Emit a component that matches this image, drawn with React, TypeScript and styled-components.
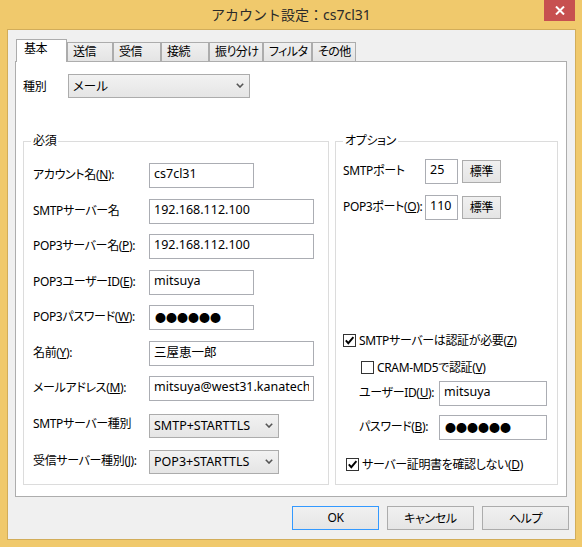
import React from "react";
import styled, { createGlobalStyle } from "styled-components";

const FONT = `"Noto Sans", "Noto Sans CJK JP", sans-serif`;

const GlobalStyle = createGlobalStyle`
  html, body { margin: 0; padding: 0; background: #ffffff; }
  body { font-family: ${FONT}; }
  * { box-sizing: border-box; }
`;

const Window = styled.div`
  width: 582px;
  height: 547px;
  background: #f0c96c;
  display: flex;
  flex-direction: column;
  font-family: ${FONT};
  font-size: 12px;
  letter-spacing: -0.35px;
  color: #000;
  font-feature-settings: "palt";
`;

const TitleBar = styled.div`
  height: 29px;
  flex: none;
  display: grid;
  grid-template-columns: 1fr auto 1fr;
  align-items: start;
`;

const Title = styled.div`
  grid-column: 2;
  font-size: 14px;
  letter-spacing: normal;
  line-height: 29px;
  color: #2a2a2a;
  font-feature-settings: normal;
  white-space: nowrap;
`;

const CloseButton = styled.div`
  grid-column: 3;
  justify-self: end;
  width: 31px;
  height: 21px;
  margin-right: 7px;
  background: #c75050;
  display: flex;
  align-items: center;
  justify-content: center;
`;

const Client = styled.div`
  flex: 1;
  margin: 0 6px 7px 7px;
  border: 1px solid #d2ad5a;
  background: #f0f0f0;
  padding: 9px 0 0 7px;
  display: flex;
  flex-direction: column;
`;

const TabStrip = styled.div`
  display: flex;
  align-items: flex-end;
  margin-left: 1px;
`;

const Tab = styled.div<{ $w: number; $active?: boolean }>`
  width: ${(p) => p.$w}px;
  height: ${(p) => (p.$active ? 23 : 19)}px;
  margin-bottom: ${(p) => (p.$active ? -1 : 0)}px;
  border: 1px solid #acacac;
  border-bottom: none;
  background: ${(p) => (p.$active ? "#ffffff" : "linear-gradient(#f0f0f0, #e4e4e4)")};
  padding: 1px 0 0 ${(p) => (p.$active ? 7 : 5)}px;
  line-height: 16px;
  letter-spacing: -0.6px;
  white-space: nowrap;
  overflow: hidden;
  position: relative;
  z-index: ${(p) => (p.$active ? 1 : 0)};
`;

const Panel = styled.div`
  height: 436px;
  margin-right: 8px;
  border: 1px solid #adadad;
  background: #ffffff;
  padding: 12px 7px 0 7px;
  display: flex;
  flex-direction: column;
`;

const TypeRow = styled.div`
  display: flex;
  align-items: center;
  height: 24px;
`;

const TypeLabel = styled.div`
  width: 45px;
`;

const Select = styled.div<{ $w: number }>`
  width: ${(p) => p.$w}px;
  height: 24px;
  border: 1px solid #acacac;
  background: linear-gradient(#f2f2f2, #e5e5e5);
  display: flex;
  align-items: center;
  justify-content: space-between;
  padding: 0 5px 1px 4px;
  font-size: 12.5px;
  letter-spacing: normal;
  white-space: nowrap;
`;

const GroupsRow = styled.div`
  display: flex;
  gap: 6px;
  margin-top: 43px;
`;

const GroupBox = styled.div<{ $w: number }>`
  position: relative;
  width: ${(p) => p.$w}px;
  height: 344px;
  border: 1px solid #dcdcdc;
`;

const Legend = styled.div`
  position: absolute;
  top: -9px;
  left: 7px;
  padding: 0 2px;
  line-height: 16px;
  background: #ffffff;
`;

const RequiredGrid = styled.div`
  display: grid;
  grid-template-columns: 116px auto;
  row-gap: 10.5px;
  padding: 21px 0 0 9px;
  align-items: center;
`;

const FieldLabel = styled.div`
  white-space: nowrap;
  padding-bottom: 3px;
`;

const TextInput = styled.input<{ $w: number }>`
  width: ${(p) => p.$w}px;
  height: 25px;
  border: 1px solid #abadb3;
  background: #ffffff;
  font-family: ${FONT};
  font-size: 12.5px;
  letter-spacing: normal;
  font-feature-settings: "palt";
  color: #000;
  margin: 0;
  padding: 0 4px 4px 4px;
  outline: none;
`;

const PasswordInput = styled(TextInput)`
  font-family: "Noto Sans CJK JP", sans-serif;
  font-feature-settings: normal;
  font-size: 11px;
  padding-left: 5px;
  padding-bottom: 2px;
`;

const SelectCell = styled.div`
  margin-top: 2px;
`;

const OptionBox = styled(GroupBox)`
  display: flex;
  flex-direction: column;
  padding: 17px 0 12px 7px;
`;

const PortRow = styled.div<{ $mt?: number }>`
  display: flex;
  align-items: center;
  margin-top: ${(p) => p.$mt ?? 0}px;
`;

const PortLabel = styled.div`
  width: 82px;
  white-space: nowrap;
  padding-bottom: 3px;
`;

const SmallButton = styled.div`
  width: 39px;
  height: 23px;
  margin-left: 4px;
  border: 1px solid #acacac;
  background: linear-gradient(#f0f0f0, #e5e5e5);
  display: flex;
  align-items: center;
  justify-content: center;
  padding-bottom: 1px;
`;

const AuthSection = styled.div`
  margin-top: auto;
  display: flex;
  flex-direction: column;
`;

const CheckRow = styled.div<{ $ml: number; $mt: number }>`
  display: flex;
  align-items: center;
  gap: 3px;
  height: 16px;
  margin-left: ${(p) => p.$ml}px;
  margin-top: ${(p) => p.$mt}px;
  white-space: nowrap;
`;

const CheckBox = styled.div`
  width: 13px;
  height: 13px;
  border: 1px solid #333333;
  background: #ffffff;
  display: flex;
  align-items: center;
  justify-content: center;
  flex: none;
`;

const AuthRow = styled.div<{ $mt: number }>`
  display: flex;
  align-items: center;
  margin-left: 16px;
  margin-top: ${(p) => p.$mt}px;
`;

const AuthLabel = styled.div`
  width: 80px;
  white-space: nowrap;
  padding-bottom: 3px;
`;

const ButtonRow = styled.div`
  display: flex;
  justify-content: flex-end;
  gap: 8px;
  margin-top: 9px;
  padding-right: 6px;
`;

const DialogButton = styled.div<{ $default?: boolean }>`
  width: 87px;
  height: 24px;
  border: 1px solid ${(p) => (p.$default ? "#3399ff" : "#acacac")};
  background: linear-gradient(#f0f0f0, #e5e5e5);
  display: flex;
  align-items: center;
  justify-content: center;
  padding-bottom: 1px;
`;

const Chevron = () => (
  <svg width="8" height="5" viewBox="0 0 8 5">
    <polyline points="0.8,0.8 4,4 7.2,0.8" fill="none" stroke="#555" strokeWidth="1.6" />
  </svg>
);

const Check = () => (
  <svg width="11" height="11" viewBox="0 0 11 11">
    <polyline points="1.8,5.4 4.3,8.2 9.4,2.2" fill="none" stroke="#000" strokeWidth="1.9" />
  </svg>
);

const CloseIcon = () => (
  <svg width="10" height="9" viewBox="0 0 10 9">
    <path d="M1 0.5 L9 8.5 M9 0.5 L1 8.5" stroke="#ffffff" strokeWidth="2" />
  </svg>
);

const tabs: { label: string; w: number }[] = [
  { label: "基本", w: 51 },
  { label: "送信", w: 46 },
  { label: "受信", w: 48 },
  { label: "接続", w: 48 },
  { label: "振り分け", w: 54 },
  { label: "フィルタ", w: 49 },
  { label: "その他", w: 44 },
];

const M = ({ children }: { children: React.ReactNode }) => <u>{children}</u>;

export default function App() {
  return (
    <>
      <GlobalStyle />
      <Window>
        <TitleBar>
          <Title>アカウント設定：cs7cl31</Title>
          <CloseButton>
            <CloseIcon />
          </CloseButton>
        </TitleBar>
        <Client>
          <TabStrip>
            {tabs.map((t, i) => (
              <Tab key={t.label} $w={t.w} $active={i === 0}>
                {t.label}
              </Tab>
            ))}
          </TabStrip>
          <Panel>
            <TypeRow>
              <TypeLabel>種別</TypeLabel>
              <Select $w={182}>
                <span>メール</span>
                <Chevron />
              </Select>
            </TypeRow>
            <GroupsRow>
              <GroupBox $w={306}>
                <Legend>必須</Legend>
                <RequiredGrid>
                  <FieldLabel>
                    アカウント名(<M>N</M>):
                  </FieldLabel>
                  <TextInput $w={105} readOnly value="cs7cl31" />
                  <FieldLabel>SMTPサーバー名</FieldLabel>
                  <TextInput $w={165} readOnly value="192.168.112.100" />
                  <FieldLabel>
                    POP3サーバー名(<M>P</M>):
                  </FieldLabel>
                  <TextInput $w={165} readOnly value="192.168.112.100" />
                  <FieldLabel>
                    POP3ユーザーID(<M>E</M>):
                  </FieldLabel>
                  <TextInput $w={105} readOnly value="mitsuya" />
                  <FieldLabel>
                    POP3パスワード(<M>W</M>):
                  </FieldLabel>
                  <PasswordInput $w={105} readOnly value="●●●●●●" />
                  <FieldLabel>
                    名前(<M>Y</M>):
                  </FieldLabel>
                  <TextInput $w={165} readOnly value="三屋恵一郎" />
                  <FieldLabel>
                    メールアドレス(<M>M</M>):
                  </FieldLabel>
                  <TextInput $w={165} readOnly value="mitsuya@west31.kanatech.co.jp" />
                  <FieldLabel>SMTPサーバー種別</FieldLabel>
                  <SelectCell>
                    <Select $w={130}>
                      <span>SMTP+STARTTLS</span>
                      <Chevron />
                    </Select>
                  </SelectCell>
                  <FieldLabel>
                    受信サーバー種別(<M>J</M>):
                  </FieldLabel>
                  <SelectCell>
                    <Select $w={130}>
                      <span>POP3+STARTTLS</span>
                      <Chevron />
                    </Select>
                  </SelectCell>
                </RequiredGrid>
              </GroupBox>
              <OptionBox $w={223}>
                <Legend>オプション</Legend>
                <PortRow>
                  <PortLabel>SMTPポート</PortLabel>
                  <TextInput $w={33} readOnly value="25" />
                  <SmallButton>標準</SmallButton>
                </PortRow>
                <PortRow $mt={11}>
                  <PortLabel>
                    POP3ポート(<M>O</M>):
                  </PortLabel>
                  <TextInput $w={33} readOnly value="110" />
                  <SmallButton>標準</SmallButton>
                </PortRow>
                <AuthSection>
                  <CheckRow $ml={0} $mt={0}>
                    <CheckBox>
                      <Check />
                    </CheckBox>
                    <span>
                      SMTPサーバーは認証が必要(<M>Z</M>)
                    </span>
                  </CheckRow>
                  <CheckRow $ml={18} $mt={11}>
                    <CheckBox />
                    <span>
                      CRAM-MD5で認証(<M>V</M>)
                    </span>
                  </CheckRow>
                  <AuthRow $mt={6}>
                    <AuthLabel>
                      ユーザーID(<M>U</M>):
                    </AuthLabel>
                    <TextInput $w={108} readOnly value="mitsuya" />
                  </AuthRow>
                  <AuthRow $mt={9}>
                    <AuthLabel>
                      パスワード(<M>B</M>):
                    </AuthLabel>
                    <PasswordInput $w={108} readOnly value="●●●●●●" />
                  </AuthRow>
                  <CheckRow $ml={3} $mt={16}>
                    <CheckBox>
                      <Check />
                    </CheckBox>
                    <span>
                      サーバー証明書を確認しない(<M>D</M>)
                    </span>
                  </CheckRow>
                </AuthSection>
              </OptionBox>
            </GroupsRow>
          </Panel>
          <ButtonRow>
            <DialogButton $default>OK</DialogButton>
            <DialogButton>キャンセル</DialogButton>
            <DialogButton>ヘルプ</DialogButton>
          </ButtonRow>
        </Client>
      </Window>
    </>
  );
}
